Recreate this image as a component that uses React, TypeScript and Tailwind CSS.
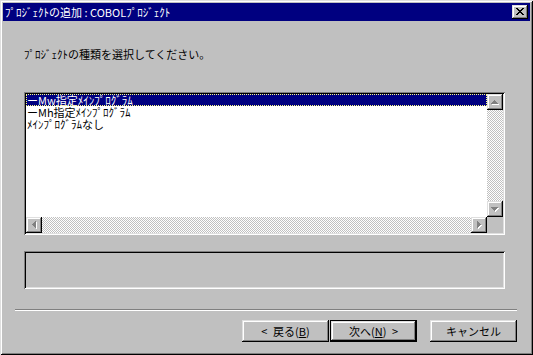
import React from 'react';

type Px = [number, number, number, number];

const raised =
  'shadow-[inset_-1px_-1px_#000,inset_1px_1px_#dfdfdf,inset_-2px_-2px_#808080,inset_2px_2px_#fff]';
const sunken =
  'shadow-[inset_1px_1px_#808080,inset_-1px_-1px_#fff,inset_2px_2px_#000,inset_-2px_-2px_#dfdfdf]';
const track =
  'bg-[repeating-conic-gradient(#c0c0c0_0_25%,#ffffff_0_50%)] bg-[length:2px_2px]';

// disabled arrow glyphs, pixel rows inside a 16x16 button
const arrows: Record<string, Px[]> = {
  up: [[7, 6, 1, 1], [6, 7, 3, 1], [5, 8, 5, 1], [4, 9, 7, 1]],
  down: [[4, 6, 7, 1], [5, 7, 5, 1], [6, 8, 3, 1], [7, 9, 1, 1]],
  left: [[6, 7, 1, 1], [7, 6, 1, 3], [8, 5, 1, 5], [9, 4, 1, 7]],
  right: [[6, 4, 1, 7], [7, 5, 1, 5], [8, 6, 1, 3], [9, 7, 1, 1]],
};

function ScrollButton({ dir }: { dir: 'up' | 'down' | 'left' | 'right' }) {
  const px = arrows[dir];
  return (
    <div className={`w-[16px] h-[16px] bg-[#c0c0c0] shrink-0 ${raised}`}>
      <svg width="16" height="16" shapeRendering="crispEdges">
        {px.map(([x, y, w, h], i) => (
          <rect key={'s' + i} x={x + 1} y={y + 1} width={w} height={h} fill="#ffffff" />
        ))}
        {px.map(([x, y, w, h], i) => (
          <rect key={i} x={x} y={y} width={w} height={h} fill="#808080" />
        ))}
      </svg>
    </div>
  );
}

function CloseGlyph() {
  const rows: Px[] = [
    [0, 0, 2, 1], [6, 0, 2, 1],
    [1, 1, 2, 1], [5, 1, 2, 1],
    [2, 2, 4, 1],
    [3, 3, 2, 1],
    [2, 4, 4, 1],
    [1, 5, 2, 1], [5, 5, 2, 1],
    [0, 6, 2, 1], [6, 6, 2, 1],
  ];
  return (
    <svg width="8" height="7" shapeRendering="crispEdges">
      {rows.map(([x, y, w, h], i) => (
        <rect key={i} x={x} y={y} width={w} height={h} fill="#000" />
      ))}
    </svg>
  );
}

function DialogButton({ children, isDefault = false, className = '' }: {
  children: React.ReactNode;
  isDefault?: boolean;
  className?: string;
}) {
  return (
    <div className={`w-[87px] h-[22px] shrink-0 ${isDefault ? 'border border-black' : ''} ${className}`}>
      <div className={`w-full h-full flex items-center justify-center whitespace-nowrap bg-[#c0c0c0] text-black ${raised}`}>
        {children}
      </div>
    </div>
  );
}

const items = ['ーMw指定ﾒｲﾝﾌﾟﾛｸﾞﾗﾑ', 'ーMh指定ﾒｲﾝﾌﾟﾛｸﾞﾗﾑ', 'ﾒｲﾝﾌﾟﾛｸﾞﾗﾑなし'];

export default function App() {
  const selected = 0;

  return (
    <div className="w-[533px] h-[355px] bg-[#c0c0c0] p-[3px] flex flex-col text-[11px] leading-[12px] font-['Noto_Sans_CJK_JP',sans-serif] shadow-[inset_1px_1px_#dfdfdf,inset_-1px_-1px_#000,inset_2px_2px_#fff,inset_-2px_-2px_#808080]">
      {/* title bar */}
      <div className="h-[18px] bg-[#000080] flex items-center pl-[2px] pr-[2px] text-white">
        <span className="whitespace-nowrap">ﾌﾟﾛｼﾞｪｸﾄの追加 : COBOLﾌﾟﾛｼﾞｪｸﾄ</span>
        <div className={`ml-auto w-[16px] h-[14px] bg-[#c0c0c0] flex items-center justify-center pb-[1px] ${raised}`}>
          <CloseGlyph />
        </div>
      </div>

      <div className="ml-[21px] mt-[27px] h-[12px] text-black whitespace-nowrap">
        ﾌﾟﾛｼﾞｪｸﾄの種類を選択してください。
      </div>

      {/* list box */}
      <div className={`ml-[21px] mt-[32px] w-[481px] h-[143px] p-[2px] ${sunken}`}>
        <div className="w-full h-full grid grid-cols-[1fr_16px] grid-rows-[1fr_16px] bg-white">
          <div className="flex flex-col">
            {items.map((item, i) => (
              <div
                key={item}
                className={`h-[12px] pl-[1px] whitespace-nowrap ${
                  i === selected
                    ? 'bg-[#000080] text-white outline-1 outline-dotted outline-[#ffff80] -outline-offset-1'
                    : 'text-black'
                }`}
              >
                {item}
              </div>
            ))}
          </div>
          <div className="flex flex-col">
            <ScrollButton dir="up" />
            <div className={`flex-1 ${track}`} />
            <ScrollButton dir="down" />
          </div>
          <div className="flex">
            <ScrollButton dir="left" />
            <div className={`flex-1 ${track}`} />
            <ScrollButton dir="right" />
          </div>
          <div className="bg-[#c0c0c0]" />
        </div>
      </div>

      {/* status box */}
      <div className={`ml-[21px] mt-[16px] w-[481px] h-[38px] ${sunken}`} />

      {/* separator */}
      <div className="ml-[12px] mt-[20px] w-[502px] h-[2px] border-t border-b border-t-[#808080] border-b-white" />

      <div className="flex mt-[9px] ml-[239px]">
        <DialogButton>
          &lt;&ensp;戻る(<span className="underline">B</span>)
        </DialogButton>
        <DialogButton isDefault className="ml-[1px]">
          次へ(<span className="underline">N</span>)&ensp;&gt;
        </DialogButton>
        <DialogButton className="ml-[13px]">キャンセル</DialogButton>
      </div>
    </div>
  );
}
